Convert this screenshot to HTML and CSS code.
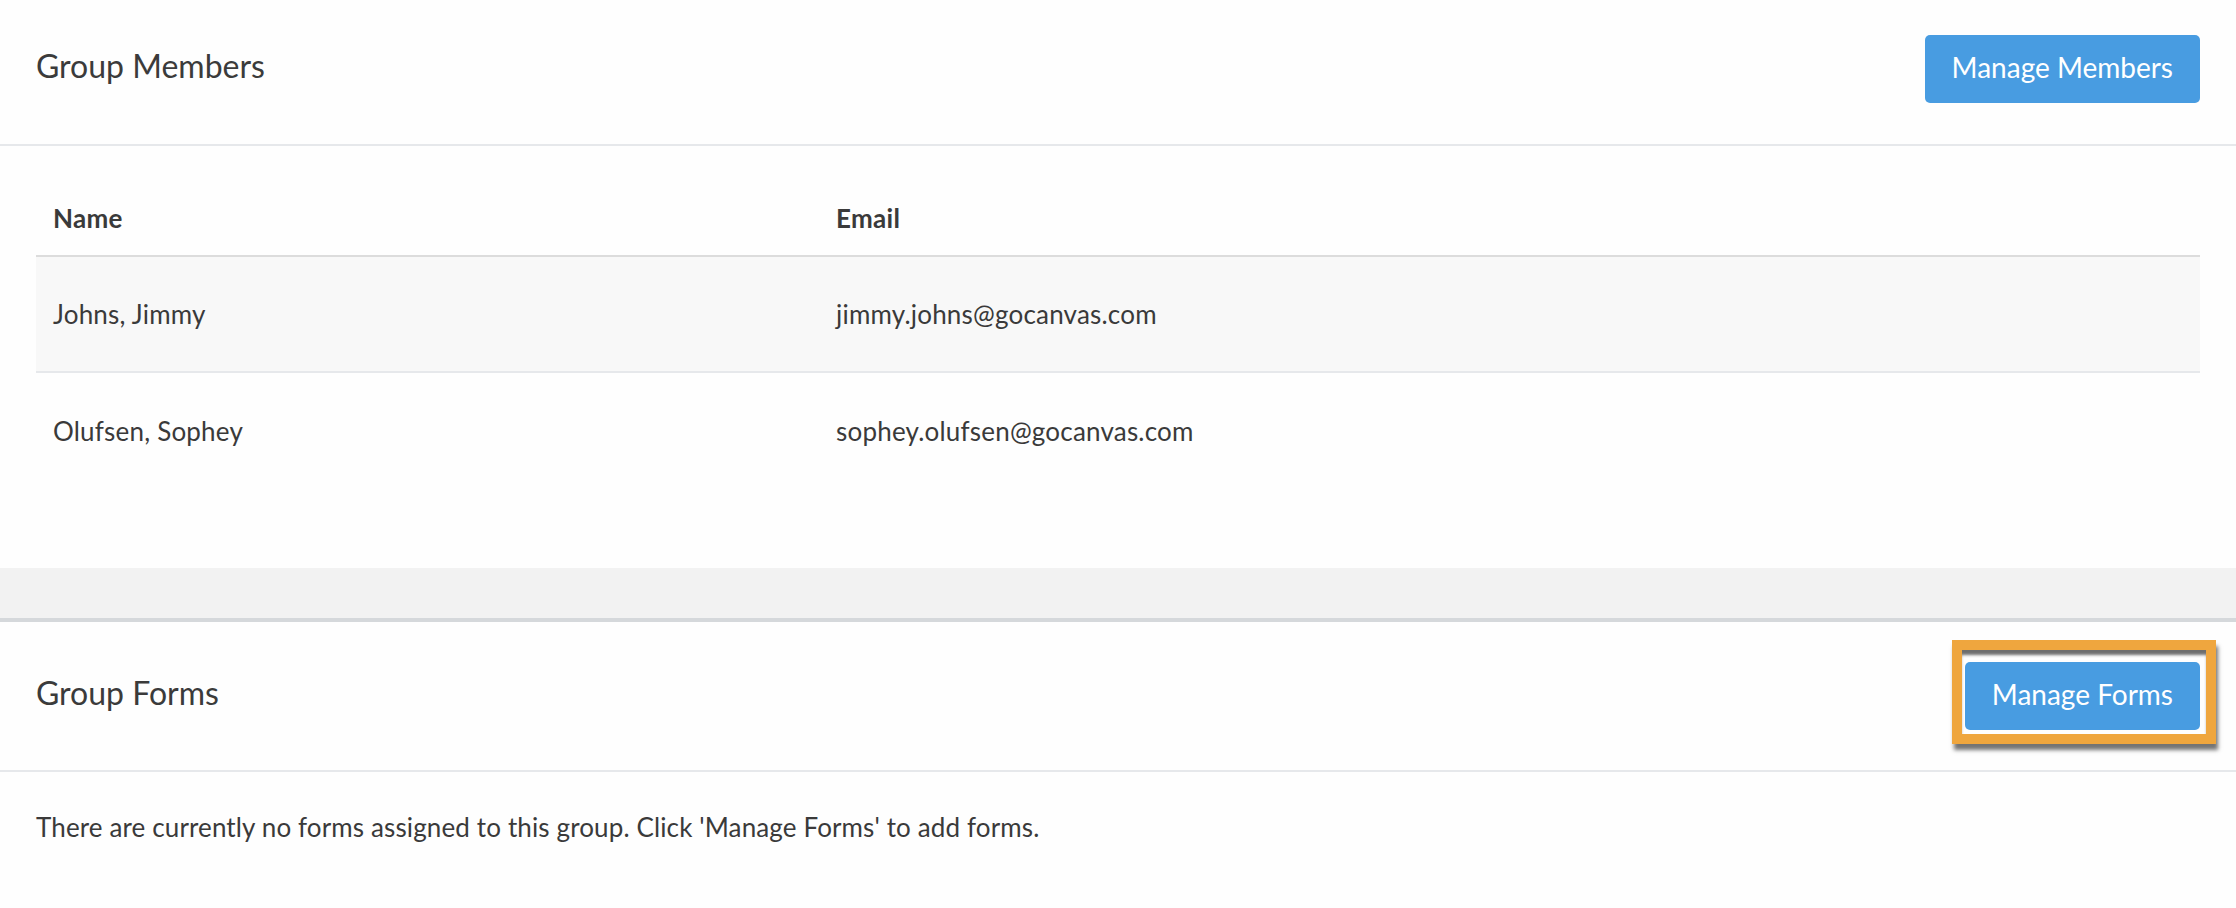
FILE: index.html
```html
<!DOCTYPE html>
<html lang="en">
<head>
<meta charset="utf-8">
<title>Group</title>
<link rel="stylesheet" href="styles.css">
</head>
<body>
<section class="panel members">
  <header class="panel-head">
    <h2 class="panel-title">Group Members</h2>
    <button class="btn">Manage Members</button>
  </header>
  <div class="panel-body table-wrap">
    <table class="members-table">
      <thead>
        <tr><th class="col-name">Name</th><th>Email</th></tr>
      </thead>
      <tbody>
        <tr class="striped"><td>Johns, Jimmy</td><td>jimmy.johns@gocanvas.com</td></tr>
        <tr><td>Olufsen, Sophey</td><td>sophey.olufsen@gocanvas.com</td></tr>
      </tbody>
    </table>
  </div>
</section>
<div class="band"></div>
<section class="panel forms">
  <header class="panel-head forms-head">
    <h2 class="panel-title">Group Forms</h2>
    <div class="btn-wrap">
      <button class="btn">Manage Forms</button>
      <span class="highlight"></span>
    </div>
  </header>
  <p class="empty">There are currently no forms assigned to this group. Click 'Manage Forms' to add forms.</p>
</section>
</body>
</html>
```
FILE: styles.css
```css
* { box-sizing: border-box; }
html, body { margin: 0; padding: 0; }
body {
  background: #fefefe;
  color: #3b3b3b;
  font-family: Lato, "Open Sans", Arial, sans-serif;
  width: 2236px;
  height: 908px;
  overflow: hidden;
}
.panel-head {
  display: flex;
  align-items: center;
  justify-content: space-between;
  padding: 35px 36px 41px 36px;
  border-bottom: 2px solid #e6e8eb;
}
.forms-head {
  padding: 40px 36px 40px 36px;
}
.panel-title {
  margin: 0 0 6px 0;
  font-size: 32px;
  font-weight: 400;
  line-height: 38px;
  color: #3b3b3b;
}
.btn {
  display: inline-flex;
  align-items: center;
  height: 68px;
  padding: 0 27px 5px 27px;
  border: 0;
  border-radius: 5px;
  background: #489ce1;
  color: #ffffff;
  font-family: inherit;
  font-size: 28px;
  font-weight: 400;
  line-height: 34px;
}
.btn-wrap {
  position: relative;
  display: flex;
}
.highlight {
  position: absolute;
  left: -13px;
  right: -16px;
  top: -22px;
  bottom: -14px;
  border: 10px solid #efa63e;
  box-shadow: 2px 6px 4px rgba(0, 0, 0, 0.55), inset 0 6px 3px -1px rgba(60, 60, 60, 0.75);
  pointer-events: none;
}
.table-wrap {
  padding: 36px 36px 80px 36px;
}
.members-table {
  width: 100%;
  border-collapse: collapse;
  font-size: 26px;
  letter-spacing: 0.2px;
}
.members-table th {
  text-align: left;
  font-weight: 700;
  height: 74px;
  padding: 0 17px 2px 17px;
  border-bottom: 2px solid #dcdcdc;
  color: #3a3a3a;
  letter-spacing: 0.3px;
}
.col-name { width: 783px; }
.members-table td {
  height: 116px;
  padding: 0 17px;
  color: #3a3a3a;
}
.members-table tr.striped td {
  background: #f8f8f8;
  border-bottom: 2px solid #e6e8eb;
}
.band {
  height: 54px;
  background: #f2f2f2;
  border-bottom: 4px solid #d5d8db;
}
.empty {
  margin: 0;
  padding: 40px 36px;
  font-size: 26px;
  line-height: 30px;
  letter-spacing: 0.13px;
  color: #3a3a3a;
}
```
